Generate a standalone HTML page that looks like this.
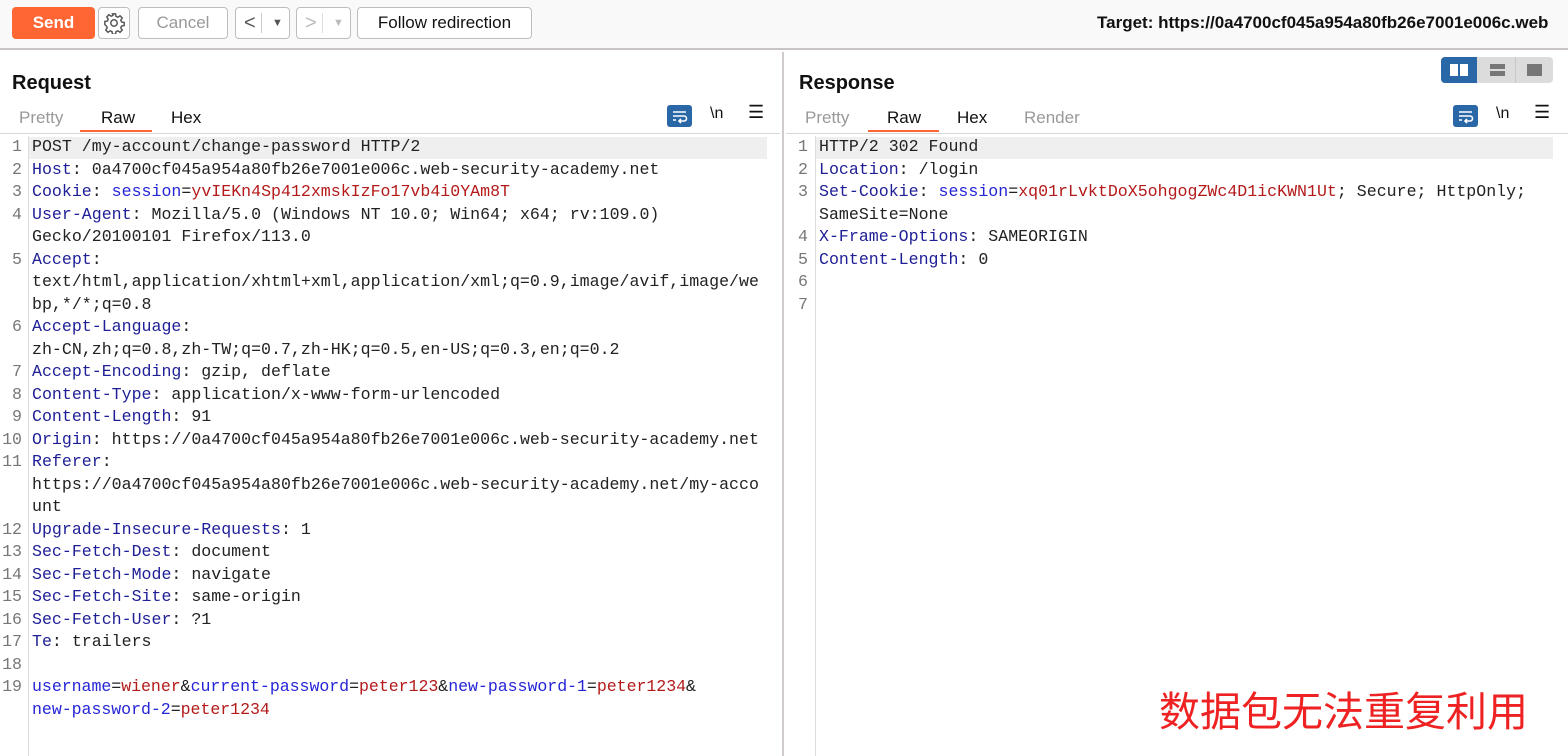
<!DOCTYPE html>
<html><head><meta charset="utf-8"><style>
*{margin:0;padding:0;box-sizing:border-box}
body{width:1568px;height:756px;background:#fff;position:relative;overflow:hidden;font-family:"Liberation Sans",sans-serif;color:#111}
.tb{position:absolute;left:0;top:0;width:1568px;height:50px;background:#f9f9f9;border-bottom:2px solid #c8c4c4}
.btn{position:absolute;top:7px;height:32px;border:1px solid #bdbdbd;border-radius:4px;background:#fff;font-size:17px;text-align:center;line-height:30px}
.abs{position:absolute}
.h{position:absolute;top:72px;font-weight:bold;font-size:20px}
.tab{position:absolute;top:108px;font-size:17px;color:#999}
.code{position:absolute;top:136px;font-family:"Liberation Mono",monospace;font-size:16.6px;line-height:22.5px;white-space:pre;color:#222}
.ln{position:absolute;top:136px;font-family:"Liberation Mono",monospace;font-size:16.6px;line-height:22.5px;white-space:pre;color:#777;text-align:right;width:22px}
.k{color:#1e1e96}.p{color:#2525d8}.v{color:#b41a1a}
</style></head><body>
<div class="tb">
<div class="btn" style="left:12px;width:83px;background:#ff6633;border-color:#ff6633;color:#fff;font-weight:bold">Send</div>
<div class="btn" style="left:98px;width:32px">
<svg width="22" height="22" viewBox="0 0 24 24" style="margin-top:4px" fill="none" stroke="#555" stroke-width="1.6"><circle cx="12" cy="12" r="3.5"/><path d="M10.3 2h3.4l.5 2.8 2 .9 2.4-1.6 2.4 2.4-1.6 2.4.9 2 2.8.5v3.4l-2.8.5-.9 2 1.6 2.4-2.4 2.4-2.4-1.6-2 .9-.5 2.8h-3.4l-.5-2.8-2-.9-2.4 1.6-2.4-2.4 1.6-2.4-.9-2L2 13.7v-3.4l2.8-.5.9-2-1.6-2.4 2.4-2.4 2.4 1.6 2-.9z"/></svg></div>
<div class="btn" style="left:138px;width:90px;color:#999">Cancel</div>
<div class="btn" style="left:235px;width:55px;color:#555;text-align:left;padding-left:8px;font-size:20px">&lt;<span style="position:absolute;left:25px;top:5px;height:20px;border-left:1px solid #ccc"></span><span style="position:absolute;left:36px;font-size:11px">▼</span></div>
<div class="btn" style="left:296px;width:55px;color:#bbb;text-align:left;padding-left:8px;font-size:20px">&gt;<span style="position:absolute;left:25px;top:5px;height:20px;border-left:1px solid #ddd"></span><span style="position:absolute;left:36px;font-size:11px">▼</span></div>
<div class="btn" style="left:357px;width:175px;color:#111">Follow redirection</div>
<div class="abs" style="left:1097px;top:13px;font-size:17px;font-weight:bold;white-space:nowrap">Target: https://0a4700cf045a954a80fb26e7001e006c.web</div>
</div>
<div class="abs" style="left:782px;top:52px;width:2px;height:704px;background:#d0cccc"></div>
<div class="h" style="left:12px">Request</div>
<div class="h" style="left:799px">Response</div>
<div class="abs" style="left:1441px;top:57px;width:112px;height:26px;border-radius:4px;background:#dcdcdc"></div>
<div class="abs" style="left:1441px;top:57px;width:36px;height:26px;border-radius:4px 0 0 4px;background:#2a67a6"></div>
<div class="abs" style="left:1450px;top:64px;width:8px;height:12px;background:#fff"></div><div class="abs" style="left:1460px;top:64px;width:8px;height:12px;background:#fff"></div>
<div class="abs" style="left:1490px;top:64px;width:15px;height:5px;background:#777"></div><div class="abs" style="left:1490px;top:71px;width:15px;height:5px;background:#777"></div>
<div class="abs" style="left:1515px;top:57px;width:1px;height:26px;background:#c8c8c8"></div>
<div class="abs" style="left:1527px;top:64px;width:15px;height:12px;background:#777"></div>

<div class="tab" style="left:19px">Pretty</div>
<div class="tab" style="left:101px;color:#111">Raw</div>
<div class="tab" style="left:171px;color:#111">Hex</div>
<div class="abs" style="left:80px;top:130px;width:72px;height:2px;background:#ff6633"></div>
<div class="abs" style="left:0;top:133px;width:780px;height:1px;background:#d8d8d8"></div>
<div class="tab" style="left:805px">Pretty</div>
<div class="tab" style="left:887px;color:#111">Raw</div>
<div class="tab" style="left:957px;color:#111">Hex</div>
<div class="tab" style="left:1024px">Render</div>
<div class="abs" style="left:868px;top:130px;width:71px;height:2px;background:#ff6633"></div>
<div class="abs" style="left:786px;top:133px;width:782px;height:1px;background:#d8d8d8"></div>

<div class="abs" style="left:667px;top:105px;width:25px;height:22px;border-radius:3px;background:#2a67a6"></div>
<div class="abs" style="left:1453px;top:105px;width:25px;height:22px;border-radius:3px;background:#2a67a6"></div>
<svg class="abs" style="left:667px;top:105px" width="25" height="22"><path d="M6 7h13M6 11h11a2.5 2.5 0 010 5h-4M14 14l-2 2 2 2M6 15h3" stroke="#fff" stroke-width="1.6" fill="none"/></svg>
<svg class="abs" style="left:1453px;top:105px" width="25" height="22"><path d="M6 7h13M6 11h11a2.5 2.5 0 010 5h-4M14 14l-2 2 2 2M6 15h3" stroke="#fff" stroke-width="1.6" fill="none"/></svg>
<div class="abs" style="left:710px;top:105px;font-size:16px">\n</div>
<div class="abs" style="left:1496px;top:105px;font-size:16px">\n</div>
<div class="abs" style="left:748px;top:102px;font-size:18px">☰</div>
<div class="abs" style="left:1534px;top:102px;font-size:18px">☰</div>

<div class="abs" style="left:28px;top:136px;width:1px;height:620px;background:#ddd"></div>
<div class="abs" style="left:815px;top:136px;width:1px;height:620px;background:#ddd"></div>
<div class="abs" style="left:29px;top:137px;width:738px;height:22px;background:#efefef"></div>
<div class="abs" style="left:816px;top:137px;width:737px;height:22px;background:#efefef"></div>

<div class="ln" style="left:0">1
2
3
4

5


6

7
8
9
10
11


12
13
14
15
16
17
18
19</div>
<div class="code" style="left:32px">POST /my-account/change-password HTTP/2
<span class="k">Host</span>: 0a4700cf045a954a80fb26e7001e006c.web-security-academy.net
<span class="k">Cookie</span>: <span class="p">session</span>=<span class="v">yvIEKn4Sp412xmskIzFo17vb4i0YAm8T</span>
<span class="k">User-Agent</span>: Mozilla/5.0 (Windows NT 10.0; Win64; x64; rv:109.0)
Gecko/20100101 Firefox/113.0
<span class="k">Accept</span>:
text/html,application/xhtml+xml,application/xml;q=0.9,image/avif,image/we
bp,*/*;q=0.8
<span class="k">Accept-Language</span>:
zh-CN,zh;q=0.8,zh-TW;q=0.7,zh-HK;q=0.5,en-US;q=0.3,en;q=0.2
<span class="k">Accept-Encoding</span>: gzip, deflate
<span class="k">Content-Type</span>: application/x-www-form-urlencoded
<span class="k">Content-Length</span>: 91
<span class="k">Origin</span>: https://0a4700cf045a954a80fb26e7001e006c.web-security-academy.net
<span class="k">Referer</span>:
https://0a4700cf045a954a80fb26e7001e006c.web-security-academy.net/my-acco
unt
<span class="k">Upgrade-Insecure-Requests</span>: 1
<span class="k">Sec-Fetch-Dest</span>: document
<span class="k">Sec-Fetch-Mode</span>: navigate
<span class="k">Sec-Fetch-Site</span>: same-origin
<span class="k">Sec-Fetch-User</span>: ?1
<span class="k">Te</span>: trailers

<span style="letter-spacing:-0.05px"><span class="p">username</span>=<span class="v">wiener</span>&amp;<span class="p">current-password</span>=<span class="v">peter123</span>&amp;<span class="p">new-password-1</span>=<span class="v">peter1234</span>&amp;
<span class="p">new-password-2</span>=<span class="v">peter1234</span></span></div>

<div class="ln" style="left:786px">1
2
3

4
5
6
7</div>
<div class="code" style="left:819px">HTTP/2 302 Found
<span class="k">Location</span>: /login
<span class="k">Set-Cookie</span>: <span class="p">session</span>=<span class="v">xq01rLvktDoX5ohgogZWc4D1icKWN1Ut</span>; Secure; HttpOnly;
SameSite=None
<span class="k">X-Frame-Options</span>: SAMEORIGIN
<span class="k">Content-Length</span>: 0</div>

<div class="abs" style="left:1159px;top:678px;font-size:41px;color:#ee2222;font-family:'Liberation Sans','Noto Sans CJK SC',sans-serif;white-space:nowrap">数据包无法重复利用</div>
</body></html>
